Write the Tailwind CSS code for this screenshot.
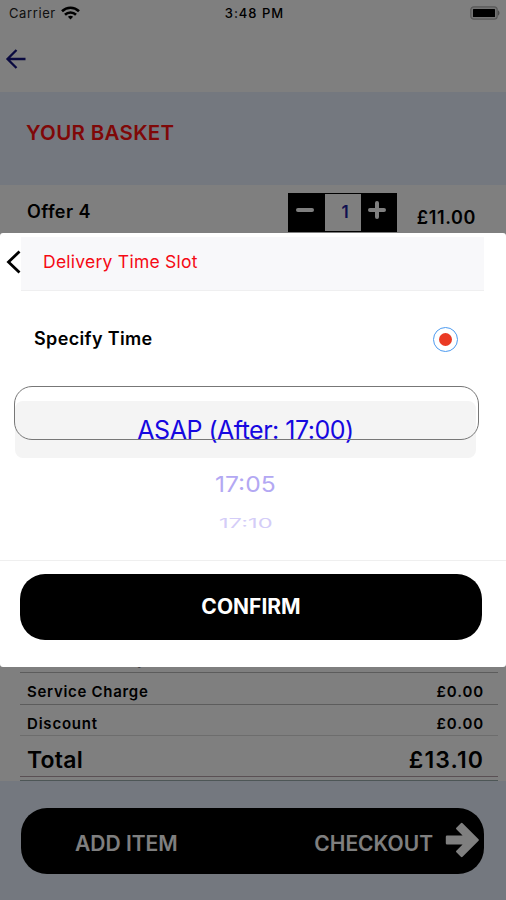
<!DOCTYPE html>
<html lang="en">
<head>
    <meta charset="UTF-8">
    <meta name="viewport" content="width=device-width, initial-scale=1.0">
    <title>Your Basket</title>
    <script src="https://cdn.jsdelivr.net/npm/@tailwindcss/browser@4"></script>
</head>
<body class="bg-white font-['Inter','Liberation_Sans',sans-serif] text-black">
    <div class="relative w-[506px] h-[900px] overflow-hidden flex flex-col whitespace-nowrap">

        <!-- Status bar -->
        <div class="h-[27px] shrink-0 grid grid-cols-3 items-center pl-[9px] pr-[6px] text-[13px] leading-none">
            <div class="flex items-center gap-[5px] text-[#222]">
                <span class="tracking-[0.6px]">Carrier</span>
                <svg class="w-[19px] h-[14px] -mt-[2px]" viewBox="0 0 19 14" fill="none" stroke="#000" stroke-width="2.6">
                    <path d="M1 5.2C5.8 0.6 13.2 0.6 18 5.2"/>
                    <path d="M4 8.7C7 5.8 12 5.8 15 8.7"/>
                    <path d="M9.5 13.4L6.9 10.8C8.4 9.4 10.6 9.4 12.1 10.8Z" fill="#000" stroke="none"/>
                </svg>
            </div>
            <span class="text-center font-medium tracking-[1px]">3:48 PM</span>
            <svg class="justify-self-end w-[30px] h-[14px] -mt-[1px]" viewBox="0 0 30 14">
                <rect x="0.8" y="0.8" width="26.4" height="12.4" rx="3" fill="#e8e8e8" stroke="#b0b0b0" stroke-width="1.2"/>
                <rect x="3" y="3" width="22" height="8" rx="0.5" fill="#000"/>
                <path d="M28 4.5C30 5 30 9 28 9.5Z" fill="#999"/>
            </svg>
        </div>

        <!-- Nav -->
        <div class="h-[65px] shrink-0 pl-[5px] pt-[21px]">
            <svg class="w-[22px] h-[22px]" viewBox="0 0 22 22" fill="none" stroke="#141480" stroke-width="2.3">
                <path d="M20.5 11H2.5M11.5 2L2.5 11L11.5 20"/>
            </svg>
        </div>

        <!-- Title -->
        <div class="h-[93px] shrink-0 bg-[#e8f1ff] pl-[26px] pt-[28px]">
            <h1 class="text-[20.5px] leading-[25px] font-semibold tracking-[0.3px] text-[#ff1010]">YOUR BASKET</h1>
        </div>

        <!-- Basket items -->
        <div class="flex-1 flex items-start justify-between pl-[27px] pr-[30px]">
            <span class="pt-[16px] text-[18px] leading-[22px] font-semibold tracking-[0.4px]">Offer 4</span>
            <div class="flex">
                <div class="mt-[8px] flex h-[39px] bg-black py-[1px]">
                    <div class="w-[37px] h-[37px] flex items-center justify-center">
                        <svg class="w-[18px] h-[18px] -mt-[5px] -ml-[4px]" viewBox="0 0 18 18" stroke="#fff" stroke-width="4" stroke-linecap="round"><path d="M2 9H16"/></svg>
                    </div>
                    <div class="w-[36px] h-[37px] bg-white flex items-center justify-center pl-[4px] text-[17px] font-semibold text-[#2020a0]">1</div>
                    <div class="w-[36px] h-[37px] flex items-center justify-center">
                        <svg class="w-[18px] h-[18px] -mt-[5px] -ml-[5px]" viewBox="0 0 18 18" stroke="#fff" stroke-width="4" stroke-linecap="round"><path d="M2 9H16M9 2V16"/></svg>
                    </div>
                </div>
                <span class="w-[79px] text-right pt-[21px] text-[18px] leading-[24px] font-semibold tracking-[0.6px]">£11.00</span>
            </div>
        </div>

        <!-- Totals -->
        <div class="shrink-0 ml-[20px] mr-[8px] text-[15px] font-semibold">
            <div class="h-[32px] flex items-center justify-between pt-[5px] pl-[7px] pr-[15px] border-b border-[#b8b8b8]">
                <span class="tracking-[0.7px]">Delivery Charge</span>
                <span class="tracking-[0.5px]">£2.10</span>
            </div>
            <div class="h-[32px] flex items-center justify-between pt-[8px] pl-[7px] pr-[14px] border-b border-[#b8b8b8]">
                <span class="tracking-[0.7px]">Service Charge</span>
                <span class="tracking-[0.9px]">£0.00</span>
            </div>
            <div class="h-[31px] flex items-center justify-between pt-[8px] pl-[7px] pr-[14px] border-b border-[#dadada]">
                <span class="tracking-[0.8px]">Discount</span>
                <span class="tracking-[0.9px]">£0.00</span>
            </div>
            <div class="h-[41px] flex items-center justify-between pt-[8px] pl-[7px] pr-[14px] text-[23px] border-b border-[#b4a0a8]">
                <span class="tracking-[0.2px]">Total</span>
                <span class="tracking-[1.1px]">£13.10</span>
            </div>
            <div class="h-[4px] border-b border-[#9aacac]"></div>
        </div>

        <!-- Footer -->
        <div class="h-[119px] shrink-0 bg-[#e8f1ff] pl-[21px] pr-[22px] pt-[27px]">
            <div class="h-[66px] rounded-[26px] bg-black text-white text-[21px] font-semibold flex items-center pt-[6px] pl-[54px] pr-[4px]">
                <span>ADD ITEM</span>
                <span class="ml-auto">CHECKOUT</span>
                <svg class="ml-[12px] w-[35px] h-[36px] -mt-[9px]" viewBox="0 0 35 36" fill="#fff" stroke="#fff" stroke-width="2.4" stroke-linejoin="round">
                    <path d="M2 14.7H20.4L12.2 6.5L16.7 2L32.7 18L16.7 34L12.2 29.5L20.4 21.3H2Z"/>
                </svg>
            </div>
        </div>

        <!-- Dimmed backdrop -->
        <div class="absolute inset-0 bg-black/50"></div>

        <!-- Time slot dialog -->
        <div class="absolute left-0 top-[233px] w-[506px] h-[434px] rounded-[3px] bg-white flex flex-col">
            <div class="h-[58px] flex pt-[4px]">
                <div class="w-[21px] pl-[6px] pt-[13px]">
                    <svg class="w-[15px] h-[24px]" viewBox="0 0 15 24" fill="none" stroke="#000" stroke-width="2.8"><path d="M13.5 1.5L2.5 12L13.5 22.5"/></svg>
                </div>
                <div class="w-[463px] h-[54px] bg-[#f8f8fa] border-b border-[#efeff0] pl-[22px] pt-[13px]">
                    <h2 class="text-[17.5px] leading-[24px] tracking-[0.25px] text-[#f50a14]">Delivery Time Slot</h2>
                </div>
            </div>

            <div class="h-[95px] flex justify-between pl-[34px] pr-[48px]">
                <span class="pt-[35px] text-[18px] leading-[25px] font-semibold tracking-[0.35px]">Specify Time</span>
                <div class="mt-[36px] w-[25px] h-[25px] rounded-full border border-[#4d9bf0] flex items-center justify-center">
                    <div class="w-[13px] h-[13px] rounded-full bg-[#ea3a24]"></div>
                </div>
            </div>

            <!-- Picker -->
            <div class="relative h-[173px] pl-[15px]">
                <div class="h-[15px]"></div>
                <div class="w-[461px] h-[57px] rounded-[8px] bg-[#f4f4f4] flex items-center justify-center pt-[2px] text-[25px] tracking-[-0.5px] text-[#1608e0]">
                    <span>ASAP (After: 17:00)</span>
                </div>
                <div class="w-[461px] h-[51px] flex items-center justify-center pt-[2px] text-[23px] text-[#b3a8f3]">
                    <span class="origin-center scale-x-[1.07] scale-y-[0.95]">17:05</span>
                </div>
                <div class="w-[461px] h-[25px] flex items-center justify-center pt-[4px] text-[21px] text-[#d4cdf8]">
                    <span class="origin-center scale-x-[1.13] scale-y-[0.6]">17:10</span>
                </div>
                <div class="absolute left-[14px] top-0 w-[465px] h-[54px] rounded-[18px] border border-[#777]"></div>
            </div>

            <div class="flex-1 border-t border-[#efefef] pl-[20px] pr-[24px] pt-[13px] mt-[1px]">
                <button class="block w-full h-[66px] rounded-[25px] bg-black text-white text-[21px] font-bold text-center">CONFIRM</button>
            </div>
        </div>
    </div>
</body>
</html>
